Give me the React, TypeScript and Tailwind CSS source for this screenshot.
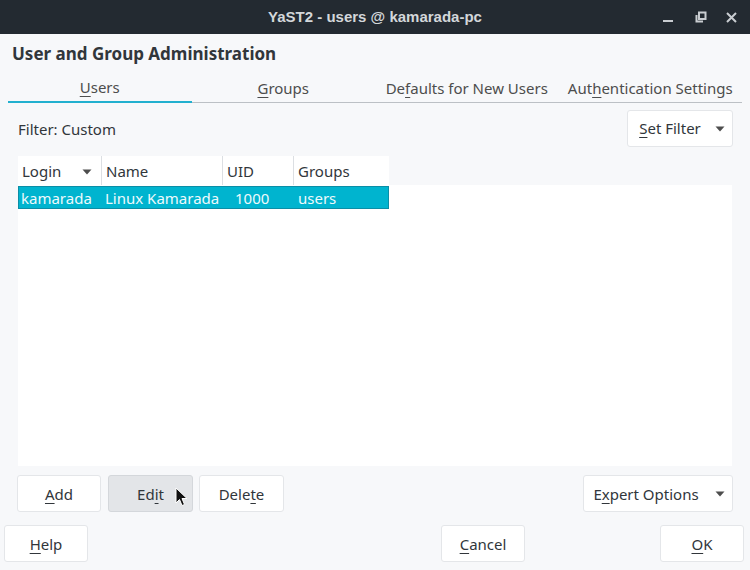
import React from 'react'

const Caret = () => (
  <svg width="10" height="6" viewBox="0 0 10 6" className="shrink-0">
    <path d="M0.5 0.5 L9.5 0.5 L5 5.5 Z" fill="#4d4d4d" />
  </svg>
)

const Btn = ({
  children,
  className = '',
  pressed = false,
}: {
  children: React.ReactNode
  className?: string
  pressed?: boolean
}) => (
  <div
    className={`h-[37px] flex items-center justify-center rounded-[3px] border text-[15px] text-[#31363b] pt-[1px] ${
      pressed ? 'bg-[#e3e5e8] border-[#d4d7db]' : 'bg-white border-[#e4e6e9]'
    } ${className}`}
  >
    {children}
  </div>
)

const U = ({ children }: { children: React.ReactNode }) => (
  <span className="underline underline-offset-[3px] decoration-1">{children}</span>
)

const cols = [
  { label: 'Login', w: 'w-[83px]', sort: true },
  { label: 'Name', w: 'w-[121px]' },
  { label: 'UID', w: 'w-[71px]' },
  { label: 'Groups', w: 'w-[96px]' },
]

export default function App() {
  return (
    <div
      className="w-[750px] h-[570px] bg-[#f7f8fa] flex flex-col overflow-hidden relative"
      style={{ fontFamily: '"Noto Sans", "Open Sans", sans-serif' }}
    >
      {/* Title bar */}
      <div className="h-[34px] shrink-0 bg-[#232a31] flex items-center relative">
        <div
          className="flex-1 text-center text-[15px] font-bold text-[#d3d7da]"
          style={{ fontFamily: '"Liberation Sans Narrow", "Liberation Sans", sans-serif' }}
        >
          YaST2 - users @ kamarada-pc
        </div>
        <div className="absolute right-0 top-0 h-[34px] flex items-center">
          <div className="w-[36px] flex justify-center">
            <div className="w-[10px] h-[2px] bg-[#c9cdd1] mt-[8px]" />
          </div>
          <div className="w-[30px] flex justify-center">
            <svg width="12" height="12" viewBox="0 0 12 12">
              <path d="M4 1.5 H10.5 V8 H4 Z" fill="none" stroke="#c9cdd1" strokeWidth="2" />
              <path d="M1.5 4 V10.5 H8" fill="none" stroke="#c9cdd1" strokeWidth="2" />
            </svg>
          </div>
          <div className="w-[34px] flex justify-center pr-[4px]">
            <svg width="11" height="11" viewBox="0 0 11 11">
              <path d="M1 1 L10 10 M10 1 L1 10" stroke="#c9cdd1" strokeWidth="2" />
            </svg>
          </div>
        </div>
      </div>

      {/* Heading */}
      <div className="h-[40px] shrink-0 pl-[12px] pt-[8px] text-[17px] font-bold text-[#31363b] leading-[24px]">
        User and Group Administration
      </div>

      {/* Tabs */}
      <div className="mx-[8px] grid grid-cols-4 h-[29px] shrink-0 text-[15px] text-[#4d4d4d]">
        <div className="flex items-start justify-center border-b-2 border-[#22b0cf] pt-[2px]">
          <span><U>U</U>sers</span>
        </div>
        <div className="flex items-start justify-center border-b border-[#bcc0c5] pt-[3px]">
          <span><U>G</U>roups</span>
        </div>
        <div className="flex items-start justify-center border-b border-[#bcc0c5] pt-[3px]">
          <span>De<U>f</U>aults for New Users</span>
        </div>
        <div className="flex items-start justify-center border-b border-[#bcc0c5] pt-[3px]">
          <span>Aut<U>h</U>entication Settings</span>
        </div>
      </div>

      {/* Content */}
      <div className="px-[18px] flex flex-col flex-1">
        <div className="h-[36px] mt-[7px] flex items-center justify-between">
          <span className="text-[15px] text-[#31363b] pt-[3px]">Filter: Custom</span>
          <Btn className="w-[106px] -mr-[1px] gap-[14px] pl-[4px]">
            <span><U>S</U>et Filter</span>
            <Caret />
          </Btn>
        </div>

        {/* Table */}
        <div className="mt-[10px] flex flex-col">
          <div className="flex h-[29px]">
            {cols.map((c, i) => (
              <div
                key={c.label}
                className={`${c.w} bg-white flex items-center justify-between pl-[4px] pr-[9px] pt-[2px] text-[15px] text-[#31363b] ${
                  i > 0 ? 'border-l border-[#dcdfe3]' : ''
                }`}
              >
                <span>{c.label}</span>
                {c.sort && <Caret />}
              </div>
            ))}
          </div>
          <div className="h-[281px] bg-white">
            <div className="w-[371px] h-[23px] mt-[1px] bg-[#00b4cf] border border-[#0b8ea6] flex items-center pt-[2px] text-[15px] text-[#eefafc]">
              <span className="w-[83px] pl-[2px]">kamarada</span>
              <span className="w-[121px] pl-[3px]">Linux Kamarada</span>
              <span className="w-[71px] pl-[12px]">1000</span>
              <span className="pl-[4px]">users</span>
            </div>
          </div>
        </div>

        {/* Action buttons */}
        <div className="mt-[9px] flex items-center">
          <Btn className="w-[84px] -ml-[1px]">
            <span><U>A</U>dd</span>
          </Btn>
          <Btn pressed className="w-[85px] ml-[7px] relative">
            <span>Ed<U>i</U>t</span>
            <svg
              width="14"
              height="21"
              viewBox="0 0 14 21"
              className="absolute left-[66px] top-[11px]"
            >
              <path
                d="M1 1 L1 16 L4.5 12.5 L7 18.5 L9.5 17.5 L7 11.5 L12 11.5 Z"
                fill="#111"
                stroke="#fff"
                strokeWidth="1"
                strokeLinejoin="round"
              />
            </svg>
          </Btn>
          <Btn className="w-[85px] ml-[6px]">
            <span>Dele<U>t</U>e</span>
          </Btn>
          <div className="flex-1" />
          <Btn className="w-[150px] -mr-[1px] gap-[16px] pl-[2px]">
            <span>E<U>x</U>pert Options</span>
            <Caret />
          </Btn>
        </div>
      </div>

      {/* Bottom buttons */}
      <div className="h-[37px] mb-[8px] mt-[13px] pl-[4px] pr-[6px] flex items-center shrink-0">
        <Btn className="w-[84px]">
          <span><U>H</U>elp</span>
        </Btn>
        <Btn className="w-[84px] ml-[353px]">
          <span><U>C</U>ancel</span>
        </Btn>
        <div className="flex-1" />
        <Btn className="w-[84px]">
          <span><U>O</U>K</span>
        </Btn>
      </div>
    </div>
  )
}
